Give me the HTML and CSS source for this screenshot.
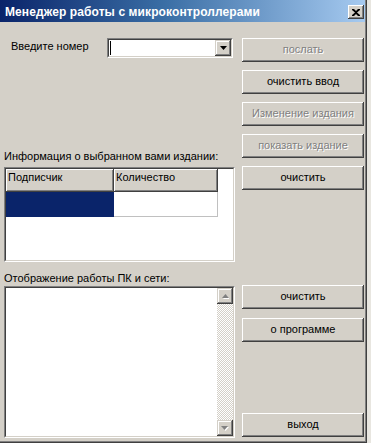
FILE: index.html
```html
<!DOCTYPE html>
<html lang="ru">
<head>
<meta charset="utf-8">
<title>Менеджер работы с микроконтроллерами</title>
<link rel="stylesheet" href="styles.css">
</head>
<body>
<div class="window">
  <div class="titlebar">
    <span class="title">Менеджер работы с микроконтроллерами</span>
    <span class="close">
      <svg width="8" height="7" viewBox="0 0 8 7"><path d="M0 0h2l2 2 2-2h2v1L5 3.5 8 6v1H6L4 5 2 7H0V6l3-2.5L0 1z" fill="#000"/></svg>
    </span>
  </div>
  <div class="client">
    <div class="leftcol">
      <div class="inputrow">
        <span class="label">Введите номер</span>
        <div class="sunken combo">
          <div class="sunken-in combo-in">
            <span class="caret"></span>
            <span class="dropbtn"><svg width="7" height="4" viewBox="0 0 7 4"><path d="M0 0h7L3.5 4z" fill="#000"/></svg></span>
          </div>
        </div>
      </div>
      <div class="caption cap1">Информация о выбранном вами издании:</div>
      <div class="sunken gridbox">
        <div class="sunken-in grid-in">
          <div class="grow">
            <div class="hcell c1">Подписчик</div>
            <div class="hcell c2">Количество</div>
          </div>
          <div class="grow">
            <div class="dcell c1 sel"></div>
            <div class="dcell c2"></div>
          </div>
        </div>
      </div>
      <div class="caption cap2">Отображение работы ПК и сети:</div>
      <div class="sunken memo">
        <div class="sunken-in memo-in">
          <div class="memo-text"></div>
          <div class="vscroll">
            <span class="sbtn"><svg width="7" height="5" viewBox="0 0 7 5"><path d="M1 5h7L4.5 1z" fill="#fff"/><path d="M0 4h7L3.5 0z" fill="#808080"/></svg></span>
            <span class="track"></span>
            <span class="sbtn"><svg width="8" height="5" viewBox="0 0 8 5"><path d="M1 1h7L4.5 5z" fill="#fff"/><path d="M0 0h7L3.5 4z" fill="#808080"/></svg></span>
          </div>
        </div>
      </div>
    </div>
    <div class="rightcol">
      <div class="btn disabled">послать</div>
      <div class="btn">очистить ввод</div>
      <div class="btn disabled">Изменение издания</div>
      <div class="btn disabled">показать издание</div>
      <div class="btn">очистить</div>
      <div class="btn b6">очистить</div>
      <div class="btn b7">о программе</div>
      <div class="btn b8">выход</div>
    </div>
  </div>
</div>
</body>
</html>
```
FILE: styles.css
```css
html, body {
  margin: 0;
  padding: 0;
  background: #e8e6e0;
}
.window {
  width: 367px;
  height: 443px;
  box-sizing: border-box;
  background: #d4d0c8;
  border-right: 1px solid #404040;
  border-bottom: 1px solid #404040;
  box-shadow: inset -1px -1px #808080;
  font-family: "Liberation Sans", Arial, sans-serif;
  font-size: 11px;
  line-height: 13px;
  color: #000;
  display: flex;
  flex-direction: column;
}
.titlebar {
  height: 22px;
  margin: 0 1px 0 0;
  background: linear-gradient(to right, #0a246a 0%, #3a6ea5 45%, #a6caf0 100%);
  display: flex;
  align-items: center;
  justify-content: space-between;
  padding: 0 1px 0 5px;
  box-sizing: border-box;
}
.title {
  color: #fff;
  font-family: "Liberation Sans", Arial, sans-serif;
  font-weight: bold;
  font-size: 12px;
  line-height: 14px;
  margin-top: 1px;
  letter-spacing: 0.1px;
}
.close {
  width: 16px;
  height: 14px;
  box-sizing: border-box;
  background: #d4d0c8;
  box-shadow: inset -1px -1px #404040, inset 1px 1px #fff, inset -2px -2px #808080;
  display: flex;
  align-items: center;
  justify-content: center;
  margin-top: 2px;
}
.client {
  display: flex;
  padding: 16px 0 0 4px;
  gap: 7px;
}
.leftcol {
  width: 231px;
  display: flex;
  flex-direction: column;
}
.inputrow {
  display: flex;
  align-items: flex-start;
  height: 20px;
}
.label {
  margin: 2px 0 0 7px;
  width: 96px;
}
.sunken {
  box-sizing: border-box;
  border: 1px solid;
  border-color: #808080 #fff #fff #808080;
}
.sunken-in {
  box-sizing: border-box;
  border: 1px solid;
  border-color: #404040 #d4d0c8 #d4d0c8 #404040;
  height: 100%;
  background: #fff;
}
.combo {
  width: 126px;
  height: 20px;
}
.combo-in {
  display: flex;
  justify-content: space-between;
  align-items: stretch;
}
.caret {
  width: 1px;
  background: #000;
  margin: 1px 0 1px 1px;
}
.dropbtn {
  width: 16px;
  box-sizing: border-box;
  background: #d4d0c8;
  box-shadow: inset -1px -1px #404040, inset 1px 1px #d4d0c8, inset -2px -2px #808080, inset 2px 2px #fff;
  display: flex;
  align-items: center;
  justify-content: center;
}
.caption {
  height: 13px;
}
.cap1 {
  margin-top: 92px;
}
.gridbox {
  margin-top: 4px;
  height: 95px;
}
.grow {
  display: flex;
}
.hcell {
  height: 23px;
  box-sizing: border-box;
  background: #d4d0c8;
  padding: 2px 0 0 2px;
  box-shadow: inset -1px -1px #404040, inset 1px 1px #fff, inset -2px -2px #808080;
}
.c1 { width: 108px; }
.c2 { width: 104px; }
.dcell {
  height: 25px;
  box-sizing: border-box;
}
.dcell.sel {
  background: #0a246a;
}
.dcell.c2 {
  background: #fff;
  border-right: 1px solid #c0c0c0;
  border-bottom: 1px solid #c0c0c0;
}
.cap2 {
  margin-top: 10px;
}
.memo {
  margin-top: 1px;
  height: 152px;
}
.memo-in {
  display: flex;
}
.memo-text {
  flex: 1;
}
.vscroll {
  width: 16px;
  display: flex;
  flex-direction: column;
}
.sbtn {
  height: 16px;
  box-sizing: border-box;
  background: #d4d0c8;
  box-shadow: inset -1px -1px #404040, inset 1px 1px #d4d0c8, inset -2px -2px #808080, inset 2px 2px #fff;
  display: flex;
  align-items: center;
  justify-content: center;
}
.track {
  flex: 1;
  background: repeating-conic-gradient(#fff 0 25%, #d4d0c8 0 50%) 0 0 / 2px 2px;
}
.rightcol {
  width: 122px;
  display: flex;
  flex-direction: column;
  gap: 8px;
}
.btn {
  height: 24px;
  box-sizing: border-box;
  background: #d4d0c8;
  box-shadow: inset -1px -1px #404040, inset 1px 1px #fff, inset -2px -2px #808080;
  display: flex;
  align-items: center;
  justify-content: center;
  padding-bottom: 1px;
}
.btn.disabled {
  color: #808080;
  text-shadow: 1px 1px #fff;
}
.b6 { margin-top: 87px; }
.b7 { margin-top: 1px; }
.b8 { margin-top: 63px; }
```
